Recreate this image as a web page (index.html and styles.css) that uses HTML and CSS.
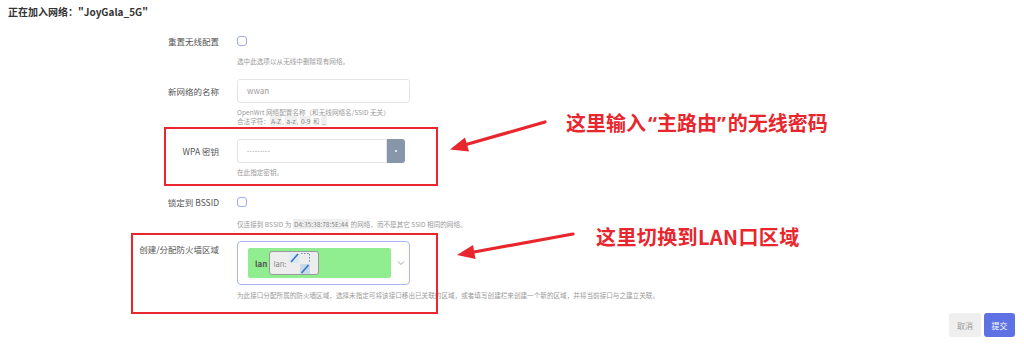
FILE: index.html
```html
<!DOCTYPE html>
<html lang="zh-cn">
<head>
  <meta charset="UTF-8" />
  <title>加入网络</title>
  <link rel="stylesheet" href="styles.css">
</head>
<body>
<div class="page">
  <div class="title">正在加入网络：&quot;JoyGala_5G&quot;</div>

  <div class="form">
    <div class="row">
      <div class="label lh-small">重置无线配置</div>
      <div class="field">
        <span class="checkbox"></span>
        <div class="help h-reset">选中此选项以从无线中删除现有网络。</div>
      </div>
    </div>

    <div class="row r-name">
      <div class="label lh-input">新网络的名称</div>
      <div class="field">
        <div class="input">wwan</div>
        <div class="help h-name">
          <div>OpenWrt 网络配置名称（和无线网络名/SSID 无关）</div>
          <div>合法字符：<code>A-Z</code>, <code>a-z</code>, <code>0-9</code> 和 <code>_</code></div>
        </div>
      </div>
    </div>

    <div class="row r-key">
      <div class="label lh-input">WPA 密钥</div>
      <div class="field">
        <div class="input-group">
          <div class="input pass">---------</div>
          <div class="reveal"><span></span></div>
        </div>
        <div class="help h-key">在此指定密钥。</div>
      </div>
    </div>

    <div class="row r-bssid">
      <div class="label lh-small">锁定到 BSSID</div>
      <div class="field">
        <span class="checkbox"></span>
        <div class="help h-bssid">仅连接到 BSSID 为 <code>D4:35:38:78:5E:44</code> 的网络，而不是其它 SSID 相同的网络。</div>
      </div>
    </div>

    <div class="row r-zone">
      <div class="label lh-zone">创建/分配防火墙区域</div>
      <div class="field">
        <div class="select">
          <div class="zone">
            <b>lan</b>
            <span class="ifbox">lan:
              <svg width="22" height="23" viewBox="0 0 22 23">
                <rect x="0.5" y="1" width="10" height="10" fill="#dbe8f5"/>
                <path d="M2 10 L9 2" stroke="#3a74c4" stroke-width="1.6" fill="none"/>
                <path d="M12 1.5 H20.5 V10" stroke="#6a8fc0" stroke-width="1" stroke-dasharray="1.5 1.5" fill="none"/>
                <rect x="11" y="12" width="10" height="10" fill="#c9d9ec"/>
                <path d="M12.5 21 L19.5 13" stroke="#3a74c4" stroke-width="1.6" fill="none"/>
              </svg>
            </span>
          </div>
          <svg class="chevron" width="8" height="6" viewBox="0 0 8 6"><path d="M1 1.5 L4 4.5 L7 1.5" stroke="#999" stroke-width="0.9" fill="none"/></svg>
        </div>
        <div class="help h-zone">为此接口分配所属的防火墙区域，选择未指定可将该接口移出已关联的区域，或者填写创建栏来创建一个新的区域，并将当前接口与之建立关联。</div>
      </div>
    </div>

    <div class="actions">
      <button class="btn btn-cancel">取消</button>
      <button class="btn btn-submit">提交</button>
    </div>
  </div>

  <!-- annotations drawn over the form -->
  <div class="mark mark-key"></div>
  <div class="mark mark-zone"></div>
  <div class="note note-key">这里输入<span class="q q-open">“</span>主路由<span class="q q-close">”</span>的无线密码</div>
  <div class="note note-zone">这里切换到LAN口区域</div>
  <svg class="arrows" width="1024" height="350" viewBox="0 0 1024 350">
    <line x1="545" y1="122" x2="467" y2="144.3" stroke="#e8262d" stroke-width="3.2" stroke-linecap="round"/>
    <polygon points="450,149.5 469,151.5 465,137.5" fill="#e8262d"/>
    <line x1="573" y1="234" x2="474" y2="252" stroke="#e8262d" stroke-width="3.2" stroke-linecap="round"/>
    <polygon points="457,255 475.5,259 473,245" fill="#e8262d"/>
  </svg>
</div>
</body>
</html>
```

FILE: styles.css
```css
body {
  margin: 0;
  background: #fff;
  font-family: "Noto Sans CJK SC", "Noto Sans", sans-serif;
  color: #444;
}
.page {
  position: relative;
  width: 1024px;
  height: 350px;
  overflow: hidden;
}
.title {
  padding: 5px 8px;
  font-size: 10px;
  line-height: 14px;
  font-weight: bold;
  color: #333;
}
.row {
  display: flex;
  margin-top: 12px;
}
.r-name { margin-top: 13px; }
.r-key { margin-top: 13px; }
.r-bssid { margin-top: 20px; }
.r-zone { margin-top: 12px; }
.label {
  width: 219px;
  text-align: right;
  font-size: 8.5px;
  color: #555;
  flex-shrink: 0;
}
.lh-small { line-height: 10px; }
.lh-input { line-height: 24px; }
.lh-zone { line-height: 16px; }
.field {
  margin-left: 18px;
  display: flex;
  flex-direction: column;
  align-items: flex-start;
}
.checkbox {
  display: block;
  width: 10px;
  height: 10px;
  box-sizing: border-box;
  border: 1px solid #9ea9ee;
  border-radius: 3px;
}
.help {
  font-size: 6.6px;
  line-height: 10px;
  color: #9a9a9a;
  white-space: nowrap;
}
.h-reset { margin-top: 10px; }
.h-name { margin-top: 5px; line-height: 9px; }
.h-key { margin-top: 4px; }
.h-bssid { margin-top: 12px; }
.h-zone { margin-top: 5px; }
.help code {
  font-family: "Noto Sans CJK SC", sans-serif;
  background: #efefef;
  color: #888;
  padding: 0 1px;
  border-radius: 1px;
}
.input {
  width: 173px;
  height: 24px;
  box-sizing: border-box;
  border: 1px solid #e4e4e4;
  border-radius: 3px;
  padding-left: 9px;
  font-size: 8px;
  line-height: 22px;
  color: #999;
}
.input-group {
  display: flex;
}
.input.pass {
  width: 150px;
  border-radius: 3px 0 0 3px;
  color: #777;
  font-size: 6px;
  letter-spacing: 0.5px;
}
.reveal {
  width: 18px;
  height: 24px;
  background: #8796a8;
  border-radius: 0 3px 3px 0;
  display: flex;
  align-items: center;
  justify-content: center;
}
.reveal span {
  width: 2px;
  height: 2px;
  background: #fff;
  border-radius: 50%;
}
.select {
  width: 173px;
  height: 44px;
  box-sizing: border-box;
  border: 1px solid #a9b4f2;
  border-radius: 4px;
  padding: 6px 0 0 10px;
  display: flex;
  align-items: flex-start;
}
.zone {
  width: 143px;
  height: 30px;
  background: #90ee90;
  border-radius: 2px;
  display: flex;
  align-items: center;
  padding-left: 7px;
  box-sizing: border-box;
  gap: 2px;
}
.zone b {
  font-size: 8px;
  color: #555;
}
.ifbox {
  width: 50px;
  height: 24px;
  box-sizing: border-box;
  border: 1px solid #9a9a9a;
  border-radius: 3px;
  background: #ededed;
  display: flex;
  align-items: center;
  padding-left: 3px;
  gap: 3px;
  font-size: 7.5px;
  color: #888;
}
.chevron {
  margin: 12px 0 0 6px;
}
.actions {
  display: flex;
  justify-content: flex-end;
  gap: 3px;
  margin-top: 13px;
  padding-right: 9px;
}
.btn {
  height: 24px;
  border: none;
  border-radius: 3px;
  padding: 0;
  font-family: "Noto Sans CJK SC", sans-serif;
  font-size: 8px;
}
.btn-cancel {
  width: 32px;
  background: #efefef;
  color: #999;
}
.btn-submit {
  width: 31px;
  background: #5e72e4;
  color: #fff;
}
.mark {
  position: absolute;
  border: 2px solid #e8262d;
  box-sizing: border-box;
}
.mark-key {
  left: 164px;
  top: 127px;
  width: 274px;
  height: 59px;
}
.mark-zone {
  left: 131px;
  top: 233px;
  width: 307px;
  height: 81px;
}
.note {
  position: absolute;
  font-size: 20px;
  line-height: 24px;
  font-weight: bold;
  color: #e8262d;
  white-space: nowrap;
}
.note .q {
  font-family: "Noto Sans", sans-serif;
}
.q-open { margin-left: 2px; }
.q-close { margin-right: 2px; }
.note-key {
  left: 566px;
  top: 111px;
}
.note-zone {
  left: 596px;
  top: 225px;
  letter-spacing: 0.4px;
}
.arrows {
  position: absolute;
  left: 0;
  top: 0;
}
```
